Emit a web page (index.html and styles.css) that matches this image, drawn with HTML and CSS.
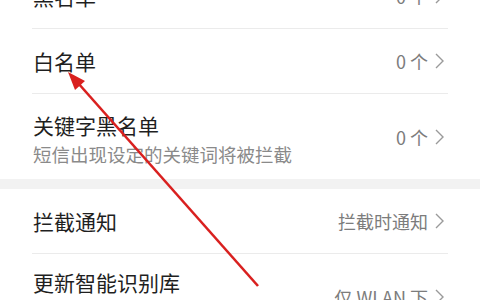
FILE: index.html
```html
<!DOCTYPE html>
<html lang="zh-CN">
<head>
<meta charset="utf-8">
<link rel="stylesheet" href="styles.css">
</head>
<body>
<div class="screen">
  <div class="list">
    <div class="row">
      <div class="title">黑名单</div>
      <div class="value"><span>0 个</span><svg class="chev" viewBox="0 0 9 16"><path d="M1 1 L8 8 L1 15"/></svg></div>
    </div>
    <div class="row">
      <div class="title">白名单</div>
      <div class="value"><span>0 个</span><svg class="chev" viewBox="0 0 9 16"><path d="M1 1 L8 8 L1 15"/></svg></div>
    </div>
    <div class="row row-tall no-line">
      <div class="texts">
        <div class="title">关键字黑名单</div>
        <div class="sub">短信出现设定的关键词将被拦截</div>
      </div>
      <div class="value"><span>0 个</span><svg class="chev" viewBox="0 0 9 16"><path d="M1 1 L8 8 L1 15"/></svg></div>
    </div>
  </div>
  <div class="band"></div>
  <div class="list">
    <div class="row">
      <div class="title">拦截通知</div>
      <div class="value"><span>拦截时通知</span><svg class="chev" viewBox="0 0 9 16"><path d="M1 1 L8 8 L1 15"/></svg></div>
    </div>
    <div class="row row-tall no-line">
      <div class="texts texts-top">
        <div class="title">更新智能识别库</div>
        <div class="sub">&nbsp;</div>
      </div>
      <div class="value"><span>仅 WLAN 下</span><svg class="chev" viewBox="0 0 9 16"><path d="M1 1 L8 8 L1 15"/></svg></div>
    </div>
  </div>
  <svg class="arrow" viewBox="0 0 480 300">
    <line x1="258" y1="286" x2="78" y2="83"/>
    <polygon points="68,72 85,81 75,90"/>
  </svg>
</div>
</body>
</html>
```
FILE: styles.css
```css
html, body {
  margin: 0;
  padding: 0;
  background: #ffffff;
}
.screen {
  position: relative;
  width: 480px;
  height: 300px;
  overflow: hidden;
  font-family: "Noto Sans CJK SC", "Noto Sans", sans-serif;
  background: #ffffff;
}
.list:first-child {
  margin-top: -36px;
}
.row {
  margin: 0 32px;
  padding: 0 4px 0 1px;
  height: 64px;
  border-bottom: 1px solid #ebebeb;
  display: flex;
  align-items: center;
  justify-content: space-between;
}
.row.no-line {
  border-bottom: none;
}
.row-tall {
  height: 85px;
}
.texts {
  display: flex;
  flex-direction: column;
  gap: 4px;
  padding-top: 4px;
}
.texts-top {
  padding-top: 0;
  margin-top: -2px;
}
.title {
  font-size: 21px;
  line-height: 26px;
  color: #1f1f1f;
}
.sub {
  font-size: 18.5px;
  line-height: 24px;
  color: #8a8a8a;
}
.value {
  display: flex;
  align-items: center;
  gap: 7px;
  font-size: 18px;
  color: #7c7c7c;
}
.chev {
  width: 9px;
  height: 16px;
  fill: none;
  stroke: #9a9a9a;
  stroke-width: 1.4;
}
.band {
  height: 10px;
  background: #f2f2f2;
}
.arrow {
  position: absolute;
  left: 0;
  top: 0;
  width: 480px;
  height: 300px;
}
.arrow line {
  stroke: #d9201f;
  stroke-width: 2.6;
}
.arrow polygon {
  fill: #d9201f;
}
```
